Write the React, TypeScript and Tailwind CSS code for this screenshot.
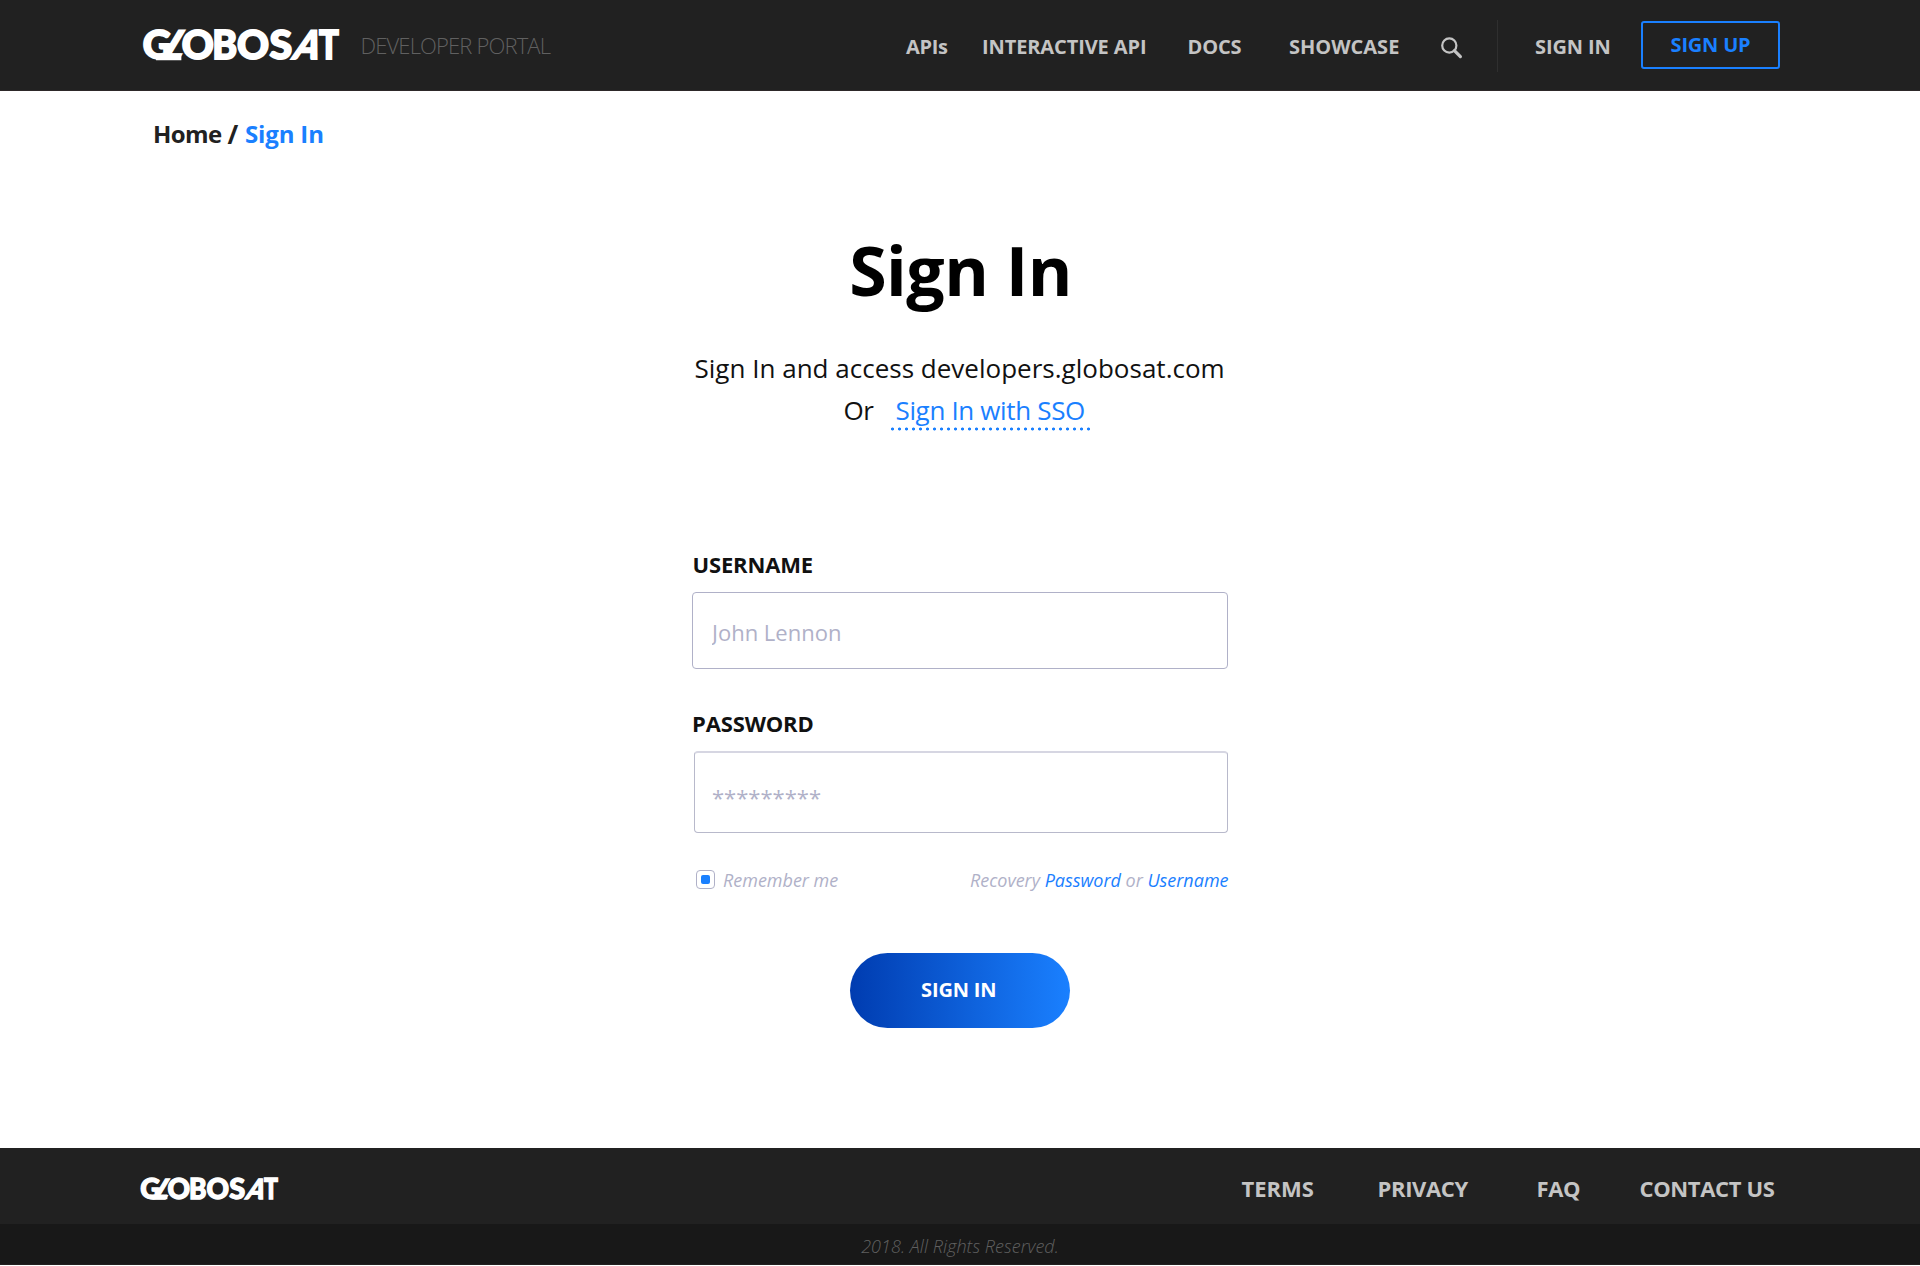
import React from "react";

function Logo({ className }: { className: string }) {
  return (
    <svg
      viewBox="-6 -16 210 64"
      className={className}
      fill="#ffffff"
      stroke="#ffffff"
      strokeWidth={1.9}
      fontFamily="Lato"
      fontWeight={900}
      fontSize={39.5}
      aria-label="Globosat"
    >
      <text transform="translate(-0.3 30.3)">G</text>
      <path d="M33.4 0 L25.2 13.6" stroke="#212121" strokeWidth="2.4" />
      <text transform="translate(15.4 30.3) skewX(-31)">L</text>
      <rect x="14" y="25.4" width="23.4" height="4.9" />
      <text transform="translate(38.7 30.3)">O</text>
      <text transform="translate(69.3 30.3) scale(0.95 1)">B</text>
      <text transform="translate(94 30.3)">O</text>
      <text transform="translate(126.4 30.3) scale(1.04 1)">S</text>
      <text transform="translate(148.3 30.3) skewX(-19) scale(0.9 1)">A</text>
      <text transform="translate(175.9 30.3) scale(0.83 1)">T</text>
    </svg>
  );
}

function SearchIcon() {
  return (
    <svg viewBox="0 0 22 22" className="mt-[36.5px] h-[22px] w-[22px]" fill="none" stroke="#c4c4c4">
      <circle cx="8.3" cy="8.5" r="7.1" strokeWidth="2.2" />
      <path d="M13.4 13.6 L19.4 19.6" strokeWidth="3.2" strokeLinecap="round" />
    </svg>
  );
}

function Header() {
  return (
    <header className="flex h-[91px] items-start border-b border-[#2d2829] bg-[#212121] pl-[137px] text-xl font-bold leading-10 text-[#c4c4c4]">
      <Logo className="mt-[12.5px] h-[64px] w-[210px]" />
      <span className="ml-[13.5px] mt-[25px] w-[545.5px] text-[22px] font-light tracking-[-0.85px] text-[#606060]">DEVELOPER PORTAL</span>
      <nav className="mt-[27px] flex">
        <a className="w-[76px] tracking-[-0.3px]">APIs</a>
        <a className="w-[205.5px] tracking-[-0.1px]">INTERACTIVE API</a>
        <a className="w-[101.5px] tracking-[-0.15px]">DOCS</a>
        <a className="w-[152px]">SHOWCASE</a>
      </nav>
      <SearchIcon />
      <span className="ml-[34px] mt-[20px] h-[52px] w-px bg-[#2f2f2f]" />
      <a className="ml-[37px] mt-[27px] w-[106px] tracking-[-0.1px]">SIGN IN</a>
      <a className="mt-[21px] h-12 w-[139px] rounded-[3px] border-2 border-[#1a80ff] text-center leading-[44px] tracking-[-0.2px] text-[#1a80ff]">SIGN UP</a>
    </header>
  );
}

function Breadcrumb() {
  return (
    <div className="flex pl-[153px] pt-[23px] text-2xl font-bold leading-10 text-[#212121]">
      <span className="w-[74.5px] tracking-[-0.6px]">Home</span>
      <span className="w-[17.5px] text-[26px]">/</span>
      <span className="tracking-[-0.15px] text-[#1a80ff]">Sign In</span>
    </div>
  );
}

function Footer() {
  return (
    <footer>
      <div className="flex h-[76px] bg-[#212121] pl-[136px] text-[22px] font-bold leading-[80px] text-[#c4c4c4]">
        <Logo className="mt-[18px] h-[45px] w-[148px]" />
        <nav className="ml-[957.5px] flex whitespace-nowrap tracking-[-0.35px]">
          <a className="w-[136px] tracking-normal">TERMS</a>
          <a className="w-[159px]">PRIVACY</a>
          <a className="w-[103px]">FAQ</a>
          <a>CONTACT US</a>
        </nav>
      </div>
      <div className="h-[41px] border-b border-[#241f20] bg-[#181818] text-center text-lg font-light italic leading-[44px] tracking-[0.05px] text-[#606060]">
        2018. All Rights Reserved.
      </div>
    </footer>
  );
}

export default function App() {
  return (
    <div className="h-[1266px] w-[1920px] bg-white font-['Open_Sans',sans-serif]">
      <Header />
      <Breadcrumb />
      <main className="mx-auto h-[994px] w-[536px]">
        <h1 className="pl-[1px] pt-[76px] text-center text-[68px] font-bold leading-[80px] tracking-[-0.5px] text-black">Sign In</h1>
        <div className="mt-[37px] text-[26px] leading-[42px] text-[#111111]">
          <p className="whitespace-nowrap pl-[2.5px] tracking-[0.01px]">Sign In and access developers.globosat.com</p>
          <div className="flex h-[42px] tracking-[-0.35px]">
            <span className="ml-[151.5px] w-[45.5px]">Or</span>
            <a className="w-[203px] text-[#1a80ff]">
              <span className="block pl-[6.5px]">Sign In with SSO</span>
              <span className="-mt-[4px] block h-[4px] bg-[radial-gradient(circle,#1a80ff_1.1px,transparent_1.9px)] bg-[length:7px_4px]" />
            </a>
          </div>
        </div>
        <form className="pt-[118px]">
          <label className="block pl-[0.5px] text-[22px] font-bold leading-[30px] tracking-[-0.15px] text-[#111111]">USERNAME</label>
          <input
            className="mt-[13px] block h-[77px] w-full rounded-[4px] border border-[#b0b1c8] px-[19px] pt-[3px] text-[22px] outline-none placeholder:text-[#b0b1c8]"
            placeholder="John Lennon"
          />
          <label className="mt-[39px] block text-[22px] font-bold leading-[30px] tracking-[-0.15px] text-[#111111]">PASSWORD</label>
          <input
            type="password"
            className="ml-[2px] mt-[13px] block h-[82px] w-[534px] rounded-[4px] border border-t-2 border-[#b8b9cb] border-t-[#d6d6e2] px-[17px] pt-[8px] text-[22px] outline-none placeholder:text-[#b0b1c8]"
            placeholder="*********"
          />
          <div className="mt-[37px] flex h-5 justify-between whitespace-nowrap text-lg italic leading-5 tracking-[-0.02px] text-[#b0b1c8]">
            <span className="flex">
              <span className="ml-[4px] flex h-[19px] w-[19px] items-center justify-center rounded-[4px] border border-[#b0b1c8]">
                <span className="h-[9px] w-[9px] rounded-[2px] bg-[#1a80ff]" />
              </span>
              <span className="ml-[8px]">Remember me</span>
            </span>
            <span className="-mr-[0.5px]">
              Recovery <a className="text-[#1a80ff]">Password</a> or <a className="text-[#1a80ff]">Username</a>
            </span>
          </div>
          <button
            type="button"
            className="mx-auto mt-[62.5px] block h-[75.5px] w-[220px] rounded-full bg-linear-to-r/srgb from-[#003cb0] to-[#1a80ff] pr-[2.5px] text-xl font-bold tracking-[-0.15px] text-white"
          >
            SIGN IN
          </button>
        </form>
      </main>
      <Footer />
    </div>
  );
}
